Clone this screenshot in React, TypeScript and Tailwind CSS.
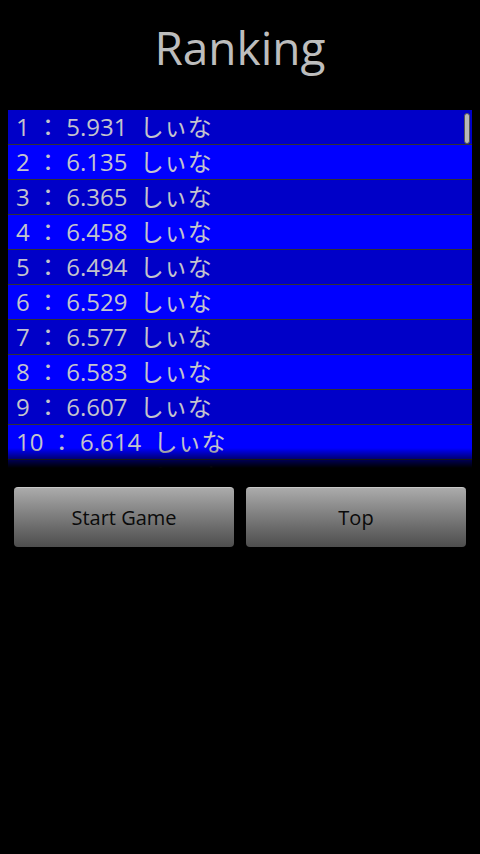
import React from "react";

const rows = [
  ["1", "5.931"],
  ["2", "6.135"],
  ["3", "6.365"],
  ["4", "6.458"],
  ["5", "6.494"],
  ["6", "6.529"],
  ["7", "6.577"],
  ["8", "6.583"],
  ["9", "6.607"],
  ["10", "6.614"],
  ["11", "6.652"],
];

export default function App() {
  return (
    <div
      className="w-[480px] h-[854px] bg-black overflow-hidden"
      style={{ fontFamily: '"Open Sans", "Noto Sans", "Noto Sans CJK JP", sans-serif' }}
    >
      <div className="pt-[24px] text-center text-[46px] leading-none text-[#bdbdbd]">Ranking</div>
      <div className="relative mx-2 mt-[40px] h-[358px] overflow-hidden">
        {rows.map(([n, t], i) => (
          <div
            key={n}
            className={`h-[35px] border-b border-[#333333] pl-[8px] text-[24px] leading-[34px] text-[#c4c4cc] whitespace-pre ${
              i % 2 === 0 ? "bg-[#0000c8]" : "bg-[#0000ff]"
            }`}
          >
            {`${n} ： ${t}  しぃな`}
          </div>
        ))}
        <div className="absolute bottom-0 left-0 right-0 h-[20px] bg-gradient-to-b from-transparent to-black" />
        <div className="absolute right-[2px] top-[3px] w-[6px] h-[31px] rounded-full bg-[#b8b8b8] border border-[#555]" />
      </div>
      <div className="flex gap-[12px] px-[14px] mt-[19px]">
        <button className="flex-1 h-[60px] rounded-[4px] bg-gradient-to-b from-[#ababab] to-[#4e4e4e] border-t border-[#c8c8c8] text-[20px] text-[#0a0a0a]">
          Start Game
        </button>
        <button className="flex-1 h-[60px] rounded-[4px] bg-gradient-to-b from-[#ababab] to-[#4e4e4e] border-t border-[#c8c8c8] text-[20px] text-[#0a0a0a]">
          Top
        </button>
      </div>
    </div>
  );
}
